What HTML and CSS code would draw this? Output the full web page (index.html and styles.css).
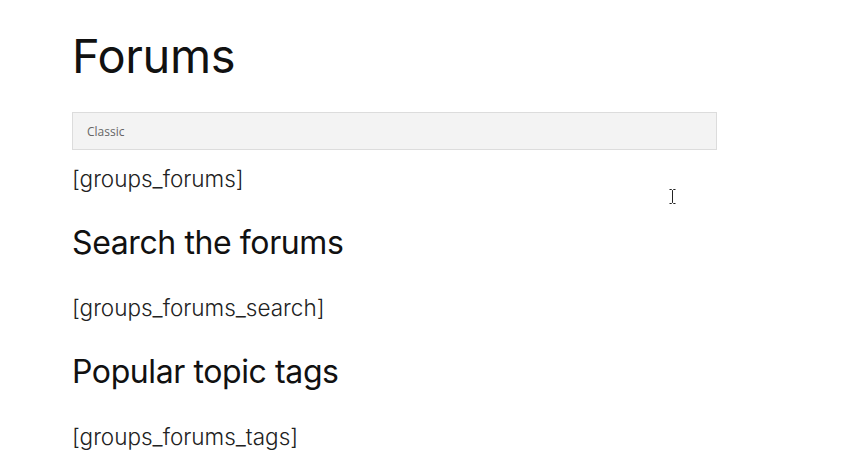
FILE: index.html
```html
<!DOCTYPE html>
<html lang="en">
<head>
<meta charset="utf-8">
<title>Forums</title>
<link rel="stylesheet" href="styles.css">
</head>
<body>
<main class="page">
  <h1 class="page-title">Forums</h1>
  <div class="select-box"><span class="select-label">Classic</span></div>
  <p class="shortcode">[groups_forums]</p>
  <h2 class="section-title">Search the forums</h2>
  <p class="shortcode">[groups_forums_search]</p>
  <h2 class="section-title">Popular topic tags</h2>
  <p class="shortcode">[groups_forums_tags]</p>
</main>
<svg class="cursor" width="7" height="15" viewBox="0 0 7 15" aria-hidden="true">
  <path d="M0.5 0.5h2l1 1 1-1h2M3.5 1.5v12M0.5 14.5h2l1-1 1 1h2" fill="none" stroke="#222" stroke-width="1"/>
</svg>
</body>
</html>
```
FILE: styles.css
```css
html, body {
  margin: 0;
  padding: 0;
  background: #fff;
}
body {
  font-family: Inter, "Noto Sans", sans-serif;
  color: #111;
  position: relative;
  width: 855px;
  height: 475px;
  overflow: hidden;
}
.page {
  padding: 26px 0 0 72px;
  width: 645px;
}
.page-title {
  margin: 0;
  font-size: 47px;
  font-weight: 400;
  letter-spacing: -0.4px;
  line-height: 60px;
}
.select-box {
  margin-top: 26px;
  height: 36px;
  border: 1px solid #dcdcdc;
  background: #f3f3f3;
  display: flex;
  align-items: center;
  padding-left: 14px;
}
.select-label {
  font-family: "Open Sans", sans-serif;
  font-size: 12px;
  color: #666;
}
.shortcode {
  margin: 0;
  font-size: 22.5px;
  font-weight: 300;
  line-height: 32px;
  color: #222;
}
.select-box + .shortcode {
  margin-top: 13px;
}
.section-title {
  margin: 28px 0 0;
  font-size: 32px;
  font-weight: 400;
  line-height: 40px;
  letter-spacing: -0.4px;
}
.section-title + .shortcode {
  margin-top: 29px;
}
.cursor {
  position: absolute;
  left: 669px;
  top: 189px;
}
```
